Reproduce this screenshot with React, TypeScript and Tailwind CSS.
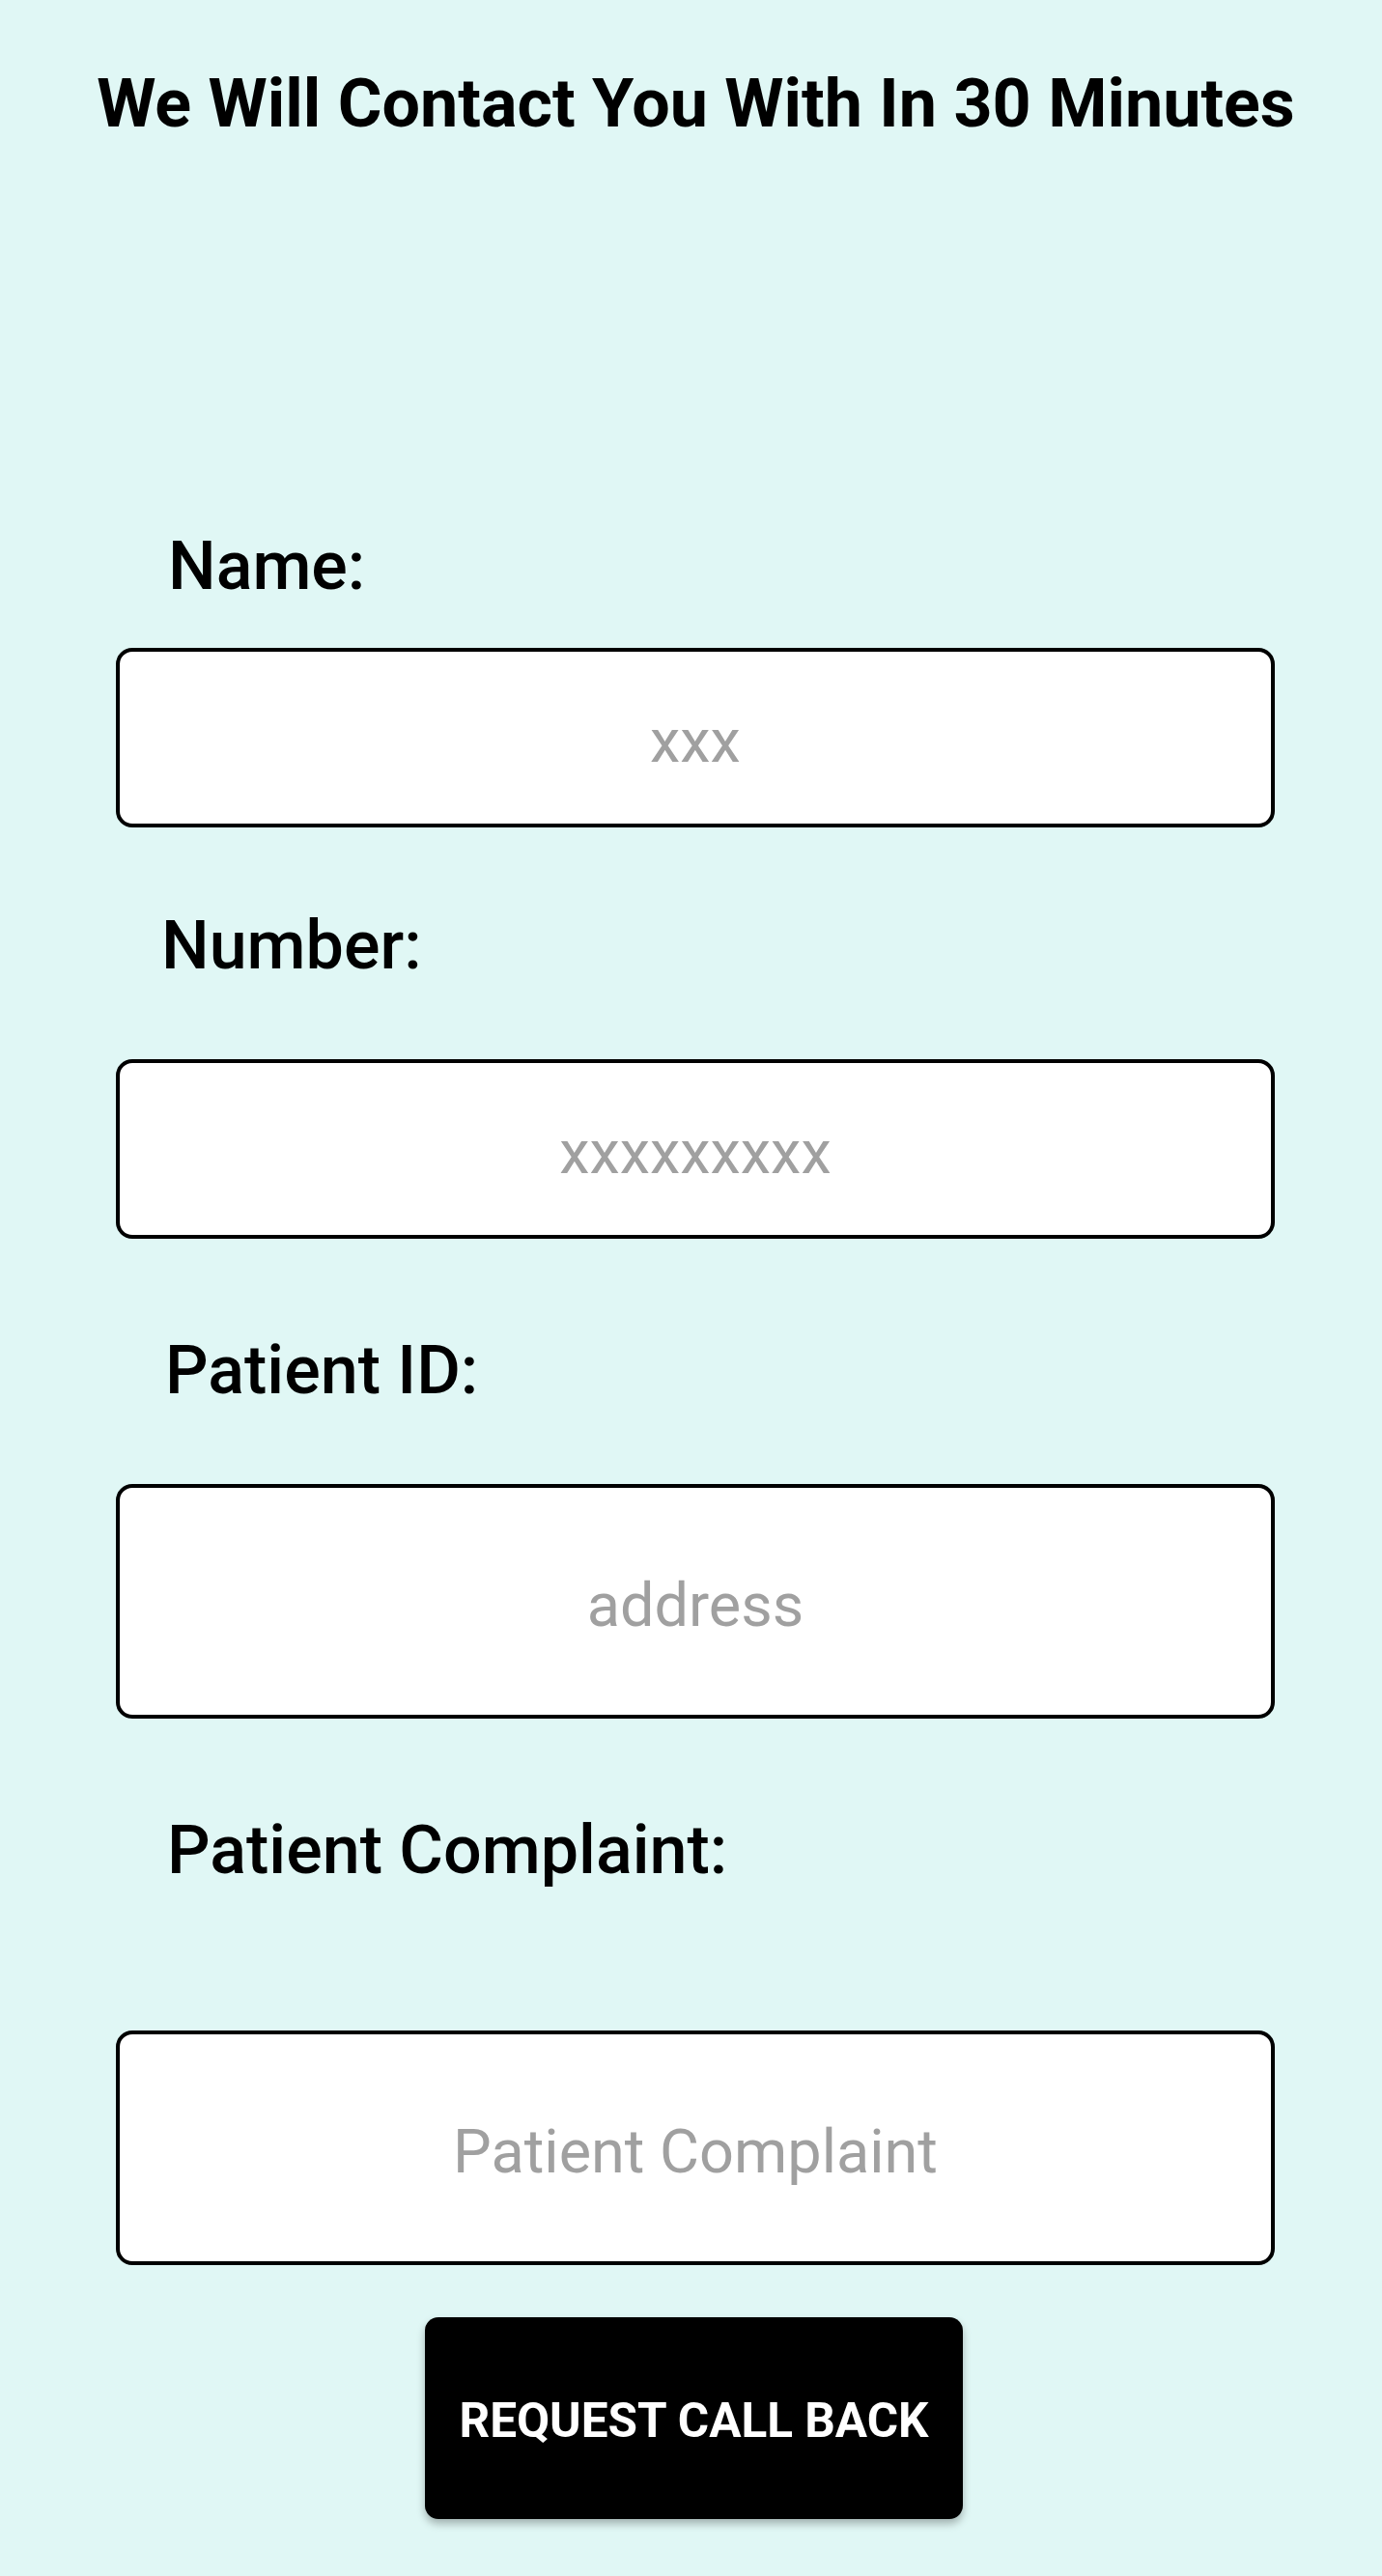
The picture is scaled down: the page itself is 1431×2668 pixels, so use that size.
import React from "react";

function Field({
  label,
  placeholder,
  labelClass,
  inputClass,
}: {
  label: string;
  placeholder: string;
  labelClass: string;
  inputClass: string;
}) {
  return (
    <>
      <div className={"text-[70px] leading-none font-medium text-black " + labelClass}>{label}</div>
      <input
        readOnly
        placeholder={placeholder}
        className={
          "block w-[1200px] ml-[120px] pt-[7px] bg-white border-[4px] border-black rounded-[17px] text-center text-[63px] text-black placeholder:text-[#a0a0a0] outline-none " +
          inputClass
        }
      />
    </>
  );
}

export default function App() {
  return (
    <div
      className="min-h-[2668px] w-full bg-[#e0f7f5] flex flex-col"
      style={{ fontFamily: "Roboto, 'Noto Sans', sans-serif" }}
    >
      <h1 className="pt-[72px] pl-[10px] text-center text-[70px] leading-none font-bold text-black">
        We Will Contact You With In 30 Minutes
      </h1>

      <Field
        label="Name:"
        placeholder="xxx"
        labelClass="mt-[409px] ml-[174px]"
        inputClass="mt-[50px] h-[186px]"
      />
      <Field
        label="Number:"
        placeholder="xxxxxxxxx"
        labelClass="mt-[87px] ml-[167px]"
        inputClass="mt-[83px] h-[186px]"
      />
      <Field
        label="Patient ID:"
        placeholder="address"
        labelClass="mt-[101px] ml-[171px]"
        inputClass="mt-[83px] h-[243px]"
      />
      <Field
        label="Patient Complaint:"
        placeholder="Patient Complaint"
        labelClass="mt-[101px] ml-[173px]"
        inputClass="mt-[152px] h-[243px]"
      />

      <div className="mt-[54px] pl-[6px] flex justify-center">
        <button className="w-[557px] h-[209px] pt-[6px] bg-black rounded-[14px] text-white text-[49.5px] font-bold uppercase shadow-[0_5px_9px_rgba(0,0,0,0.28)]">
          Request Call Back
        </button>
      </div>
    </div>
  );
}
